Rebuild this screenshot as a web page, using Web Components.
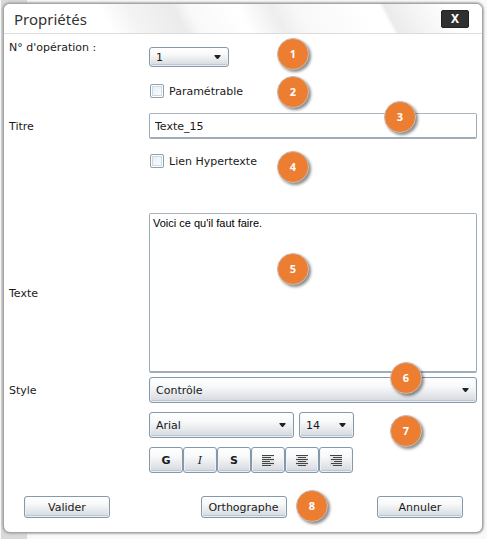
<!DOCTYPE html>
<html lang="fr">
<head>
<meta charset="utf-8">
<title>Propriétés</title>
<style>
    html, body{
        height:100%;
    }
    body{
        margin:0;
        box-sizing:border-box;
        padding:4px 5px 7px 4px;
        background:linear-gradient(#d9d9d9,#d9d9d9) 1px 0 / 26px 100% no-repeat #f9f9f9;
        font:11px/16px "DejaVu Sans", sans-serif;
        color:#1a1a1a;
    }
</style>
</head>
<body>

<fenetre-dialogue titre="Propriétés">
    <champ-liste etiquette="N° d'opération :" valores="1" class="operation"></champ-liste>
    <champ-case etiquette="Paramétrable"></champ-case>
    <champ-texte etiquette="Titre" valeur="Texte_15"></champ-texte>
    <champ-case etiquette="Lien Hypertexte" class="lien"></champ-case>
    <champ-zone etiquette="Texte" valeur="Voici ce qu'il faut faire."></champ-zone>
    <champ-liste etiquette="Style" valores="Contrôle" class="style"></champ-liste>
    <barre-police></barre-police>

    <bouton-action slot="actions">Valider</bouton-action>
    <bouton-action slot="actions">Orthographe</bouton-action>
    <bouton-action slot="actions">Annuler</bouton-action>

    <pastille-num slot="reperes" x="273" y="34">1</pastille-num>
    <pastille-num slot="reperes" x="273" y="72">2</pastille-num>
    <pastille-num slot="reperes" x="380" y="97">3</pastille-num>
    <pastille-num slot="reperes" x="273" y="147">4</pastille-num>
    <pastille-num slot="reperes" x="273" y="249">5</pastille-num>
    <pastille-num slot="reperes" x="386" y="358">6</pastille-num>
    <pastille-num slot="reperes" x="386" y="411">7</pastille-num>
    <pastille-num slot="reperes" x="292" y="486">8</pastille-num>
</fenetre-dialogue>

<script>
// Estilos comunes de los controles
const base = `
    *{ box-sizing:border-box; }
    .ligne{
        display:grid;
        grid-template-columns:140px 1fr;
        align-items:center;
    }
    label{ padding-top:2px; }
    input, textarea, select, button{
        font:inherit;
        color:inherit;
        margin:0;
    }
    select, button{
        border:1px solid #8499ab;
        border-radius:3px;
        background:linear-gradient(#ffffff 0%, #f8f9fa 35%, #dfe2e6 80%, #d3d7dc 100%);
        box-shadow:inset 0 0 0 1px rgba(255,255,255,.7), inset 0 -1px 0 1px rgba(132,153,171,.3);
    }
    input[type=text], textarea{
        display:block;
        width:100%;
        border:1px solid #9dabb8;
        border-top-color:#a9b4bf;
        border-bottom:2px solid #a0acb8;
        border-radius:2px;
        background:#fff;
    }
    .combo{
        position:relative;
        display:block;
    }
    .combo select{
        display:block;
        appearance:none;
        width:100%;
        height:26px;
        padding:1px 20px 0 6px;
    }
    .combo svg{
        position:absolute;
        right:8px;
        top:50%;
        margin-top:-2px;
        pointer-events:none;
    }
`;
const fleche = `<svg width="7" height="5" viewBox="0 0 7 5"><path d="M0.500 0h6v1L4 4H3L0.500 1z" fill="#222"/></svg>`;

class FenetreDialogue extends HTMLElement{
    constructor(){
        super()
        this.attachShadow({mode:'open'})
    }
    connectedCallback(){
        this.shadowRoot.innerHTML=`
        <style>
            *{ box-sizing:border-box; }
            :host{
                display:flex;
                flex-direction:column;
                position:relative;
                min-height:100%;
                box-sizing:border-box;
                border-radius:6px;
                background:#fff;
                box-shadow:0 0 0 1px #a6a6a6, 0 0 2px 2px #b0b0b0;
            }
            header{
                display:flex;
                align-items:center;
                justify-content:space-between;
                height:30px;
                padding:0 13px 0 10px;
                border-bottom:1px solid #dcdcdc;
                border-radius:6px 6px 0 0;
                background:
                    linear-gradient(62deg, transparent 79%, #ebebeb 80%, #f5f5f5 86%, #fff 93%),
                    linear-gradient(62deg, #fff 22%, #f3f3f3 28%, #ebebeb 37%, #f9f9f9 40%, #fff 50%, #eeeeee 57%, #f8f8f8 62%, #fff 76%);
            }
            h1{
                margin:0;
                font:15px/20px "Noto Sans", sans-serif;
                color:#333;
            }
            header button{
                width:28px;
                height:18px;
                padding:0;
                border:1px solid #222;
                border-radius:2px;
                background:#303030;
                color:#fff;
                font:bold 12px/14px "Noto Sans", sans-serif;
            }
            main{
                display:flex;
                flex-direction:column;
                flex:1;
                padding:13px 5px 0 5px;
            }
            footer{
                display:flex;
                justify-content:space-between;
                padding:0 19px 14px 20px;
            }
        </style>
        <header>
            <h1>${this.getAttribute("titre")}</h1>
            <button type="button" aria-label="Fermer">X</button>
        </header>
        <main><slot></slot></main>
        <footer><slot name="actions"></slot></footer>
        <slot name="reperes"></slot>
        `
    }
}
customElements.define("fenetre-dialogue",FenetreDialogue)


class ChampListe extends HTMLElement{
    constructor(){
        super()
        this.attachShadow({mode:'open'})
    }
    connectedCallback(){
        let opciones = this.getAttribute("valores").split(",").map(v=>`<option>${v}</option>`).join("")
        this.shadowRoot.innerHTML=`
        <style>
            ${base}
            :host{ display:block; }
            :host(.style){ margin-top:4px; }
            :host(.operation) .ligne{ align-items:start; }
            :host(.operation) label{ margin-top:-9px; }
            :host(.operation) .combo{ width:80px; }
            :host(.operation) select{ height:20px; }
        </style>
        <div class="ligne">
            <label for="liste">${this.getAttribute("etiquette")}</label>
            <span class="combo"><select id="liste">${opciones}</select>${fleche}</span>
        </div>
        `
    }
}
customElements.define("champ-liste",ChampListe)


class ChampCase extends HTMLElement{
    constructor(){
        super()
        this.attachShadow({mode:'open'})
    }
    connectedCallback(){
        this.shadowRoot.innerHTML=`
        <style>
            ${base}
            :host{
                display:block;
                margin:16px 0 14px 141px;
            }
            :host(.lien){
                margin-top:14px;
                margin-bottom:44px;
            }
            label{
                display:flex;
                align-items:center;
                gap:5px;
                padding:0;
            }
            span{ padding-top:1px; margin-bottom:-1px; }
            input{
                appearance:none;
                width:14px;
                height:14px;
                border:1px solid #8e9fae;
                border-radius:2px;
                background:linear-gradient(135deg,#e3edf6,#fff);
                box-shadow:inset 0 0 0 1px #fff, inset 0 0 0 2px #ccd8e2;
            }
        </style>
        <label><input type="checkbox"><span>${this.getAttribute("etiquette")}</span></label>
        `
    }
}
customElements.define("champ-case",ChampCase)


class ChampTexte extends HTMLElement{
    constructor(){
        super()
        this.attachShadow({mode:'open'})
    }
    connectedCallback(){
        this.shadowRoot.innerHTML=`
        <style>
            ${base}
            :host{ display:block; }
            input[type=text]{
                height:26px;
                padding:1px 4px 0 5px;
            }
        </style>
        <div class="ligne">
            <label for="texte">${this.getAttribute("etiquette")}</label>
            <input type="text" id="texte" value="${this.getAttribute("valeur")}">
        </div>
        `
    }
}
customElements.define("champ-texte",ChampTexte)


class ChampZone extends HTMLElement{
    constructor(){
        super()
        this.attachShadow({mode:'open'})
    }
    connectedCallback(){
        this.shadowRoot.innerHTML=`
        <style>
            ${base}
            :host{
                display:flex;
                flex:1;
                min-height:80px;
            }
            .ligne{ flex:1; }
            textarea{
                height:100%;
                padding:1px 3px;
                resize:none;
                font:11px/16px "Liberation Sans", Arial, sans-serif;
                color:#000;
            }
        </style>
        <div class="ligne">
            <label for="zone">${this.getAttribute("etiquette")}</label>
            <textarea id="zone">${this.getAttribute("valeur")}</textarea>
        </div>
        `
    }
}
customElements.define("champ-zone",ChampZone)


class BarrePolice extends HTMLElement{
    constructor(){
        super()
        this.attachShadow({mode:'open'})
    }
    // lineas de los iconos de alineacion: [x, ancho]
    icono(lineas){
        let rects = lineas.map(([x,w],i)=>`<rect x="${x}" y="${i*2}" width="${w}" height="1"/>`).join("")
        return `<svg width="12" height="12" viewBox="0 0 12 12"><rect width="12" height="11" fill="#777" opacity=".12"/><g fill="#444">${rects}</g></svg>`
    }
    connectedCallback(){
        this.shadowRoot.innerHTML=`
        <style>
            ${base}
            :host{
                display:block;
                margin:9px 0 23px 140px;
            }
            .listes{
                display:flex;
                gap:5px;
                margin-bottom:9px;
            }
            .police{ width:145px; }
            .taille{ width:55px; }
            .outils{ display:flex; }
            button{
                display:flex;
                align-items:center;
                justify-content:center;
                width:34px;
                height:26px;
                padding:1px 0 0 0;
            }
            i{ font-family:"DejaVu Serif", serif; }
        </style>
        <div class="listes">
            <span class="combo police"><select aria-label="Police"><option>Arial</option></select>${fleche}</span>
            <span class="combo taille"><select aria-label="Taille"><option>14</option></select>${fleche}</span>
        </div>
        <div class="outils">
            <button type="button"><b>G</b></button>
            <button type="button"><i>I</i></button>
            <button type="button"><b>S</b></button>
            <button type="button" aria-label="Gauche">${this.icono([[0,12],[0,9],[0,12],[0,8],[0,12],[0,9]])}</button>
            <button type="button" aria-label="Centrer">${this.icono([[0,12],[2,8],[0,12],[2,8],[0,12],[2,8]])}</button>
            <button type="button" aria-label="Droite">${this.icono([[0,12],[3,9],[1,11],[4,8],[1,11],[3,9]])}</button>
        </div>
        `
    }
}
customElements.define("barre-police",BarrePolice)


class BoutonAction extends HTMLElement{
    constructor(){
        super()
        this.attachShadow({mode:'open'})
        this.shadowRoot.innerHTML=`
        <style>
            ${base}
            :host{ display:block; }
            button{
                display:block;
                width:86px;
                height:22px;
                padding:1px 0 0 0;
            }
        </style>
        <button type="button"><slot></slot></button>
        `
    }
}
customElements.define("bouton-action",BoutonAction)


class PastilleNum extends HTMLElement{
    constructor(){
        super()
        this.attachShadow({mode:'open'})
    }
    connectedCallback(){
        this.style.left = this.getAttribute("x")+"px"
        this.style.top = this.getAttribute("y")+"px"
        this.shadowRoot.innerHTML=`
        <style>
            :host{
                position:absolute;
                display:flex;
                align-items:center;
                justify-content:center;
                box-sizing:border-box;
                width:32px;
                height:32px;
                border:1px solid #c8bdb4;
                border-radius:50%;
                background:#ed7d31;
                box-shadow:2px 2px 3px rgba(0,0,0,.45);
                color:#fff;
                font:bold 11px/16px "Noto Sans", sans-serif;
            }
        </style>
        <slot></slot>
        `
    }
}
customElements.define("pastille-num",PastilleNum)
</script>
</body>
</html>
